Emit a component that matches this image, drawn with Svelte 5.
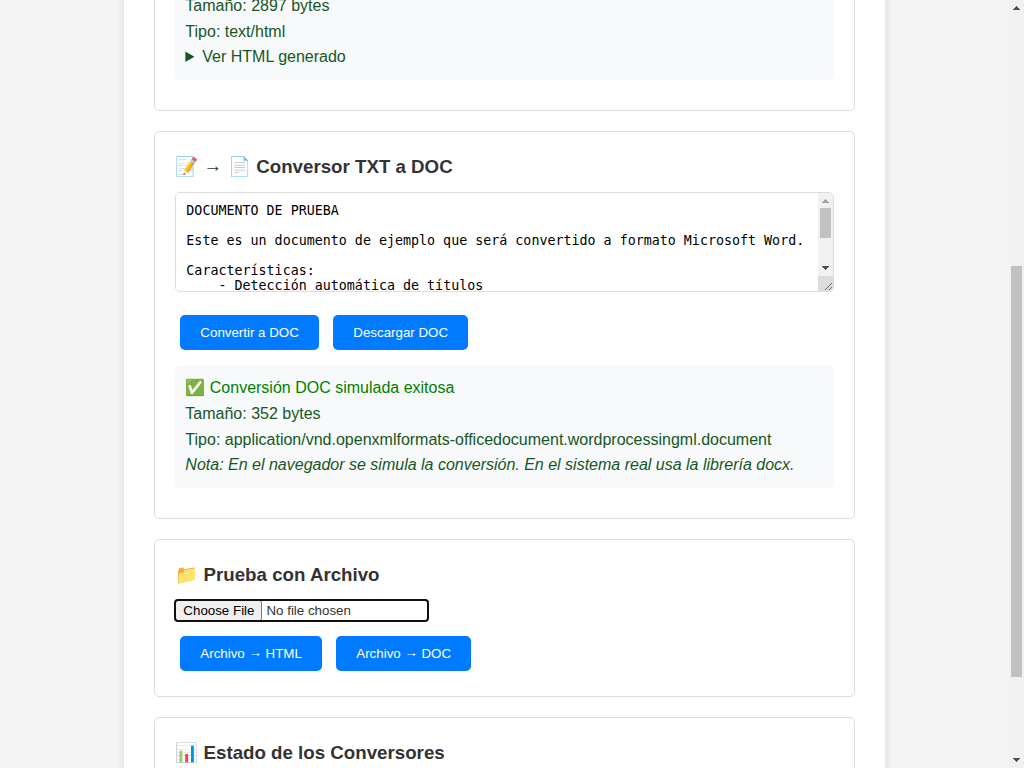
<script>
  const documentText = `DOCUMENTO DE PRUEBA

Este es un documento de ejemplo que será convertido a formato Microsoft Word.

Características:
    - Detección automática de títulos
    - Preservación de párrafos
    - Formato profesional

Fin del documento.`;
</script>

<div class="window">
  <main class="viewport">
    <div class="container">
      <section class="card">
        <div class="result first">
          <div>Tamaño: 2897 bytes</div>
          <div>Tipo: text/html</div>
          <details><summary>Ver HTML generado</summary></details>
        </div>
      </section>

      <section class="card">
        <h3>📝 <span class="arrow">→</span> 📄 Conversor TXT a DOC</h3>
        <div class="editor">
          <textarea value={documentText} spellcheck="false"></textarea>
          <svg class="editor-bar" width="15" height="98" shape-rendering="crispEdges">
            <path d="M0 0h15v98H0z" fill="#f1f1f1" />
            <path d="M7 6h1v1h1v1h1v1h1v1H4V9h1V8h1V7h1z" fill="#a3a3a3" />
            <path d="M2 15h11v30H2z" fill="#c1c1c1" />
            <path d="M4 73h7v1h-1v1H9v1H8v1H7v-1H6v-1H5v-1H4z" fill="#505050" />
            <path d="M0 83h15v15H0z" fill="#dcdcdc" />
            <path d="M7 97l7-7M11 97l3-3" stroke="#6a6a6a" fill="none" shape-rendering="auto" />
          </svg>
        </div>
        <div class="actions">
          <button>Convertir a DOC</button>
          <button>Descargar DOC</button>
        </div>
        <div class="result">
          <div class="success">✅ Conversión DOC simulada exitosa</div>
          <div>Tamaño: 352 bytes</div>
          <div>Tipo: application/vnd.openxmlformats-officedocument.wordprocessingml.document</div>
          <div><em>Nota: En el navegador se simula la conversión. En el sistema real usa la librería docx.</em></div>
        </div>
      </section>

      <section class="card">
        <h3>📁 Prueba con Archivo</h3>
        <input type="file" />
        <div class="actions file-actions">
          <button>Archivo <span class="arrow">→</span> HTML</button>
          <button>Archivo <span class="arrow">→</span> DOC</button>
        </div>
      </section>

      <section class="card last">
        <h3>📊 Estado de los Conversores</h3>
      </section>
    </div>
  </main>
  <div class="scrollbar">
    <svg width="15" height="15" shape-rendering="crispEdges"><path d="M7 6h1v1h1v1h1v1h1v1H4V9h1V8h1V7h1z" fill="#505050" /></svg>
    <div class="track"><div class="thumb"></div></div>
    <svg width="15" height="15" shape-rendering="crispEdges"><path d="M4 5h7v1h-1v1H9v1H8v1H7V8H6V7H5V6H4z" fill="#505050" /></svg>
  </div>
</div>

<style>
  :global(body) {
    margin: 0;
    overflow: hidden;
    background: #f4f4f4;
  }
  .window {
    display: flex;
    width: 1024px;
    height: 768px;
    overflow: hidden;
    font-family: "Liberation Sans", Arial, sans-serif;
    font-size: 16px;
    line-height: 1.6;
    color: #333;
    background: #f4f4f4;
  }
  .viewport {
    width: 1009px;
    height: 768px;
    overflow: hidden;
  }
  .container {
    box-sizing: border-box;
    width: 760.3px;
    height: 920px;
    margin: -37.9px auto 0;
    padding: 0 30px;
    background: #fff;
    box-shadow: 0 2px 10px rgba(0, 0, 0, 0.1);
  }
  .card {
    box-sizing: border-box;
    padding: 20px;
    margin-bottom: 20px;
    border: 1px solid #ddd;
    border-radius: 5px;
  }
  .last {
    height: 180px;
  }
  h3 {
    margin: 0 0 10px;
    font-size: 18.72px;
    line-height: 1.6;
  }
  .arrow {
    line-height: 0;
    vertical-align: 0.1em;
  }
  h3 .arrow {
    margin-right: 0.6px;
  }
  .editor {
    position: relative;
  }
  .editor-bar {
    position: absolute;
    top: 1px;
    right: 1px;
    border-radius: 0 4px 4px 0;
  }
  textarea {
    display: block;
    box-sizing: border-box;
    width: 100%;
    height: 100px;
    padding: 10px;
    border: 1px solid #ddd;
    border-radius: 5px;
    font: 13.3333px "DejaVu Sans Mono", monospace;
  }
  .actions {
    display: flex;
    gap: 14.45px;
    margin: 23px 5px 15px;
  }
  .file-actions {
    margin: 15px 5px 5px;
  }
  button {
    padding: 10px 20px;
    border: 0;
    border-radius: 5px;
    background: #007bff;
    color: #fff;
    font: 13.3333px "Liberation Sans", Arial, sans-serif;
  }
  .result {
    padding: 10px;
    margin-bottom: 10px;
    border-radius: 5px;
    background: #f8f9fa;
    color: #155724;
  }
  .first {
    padding-bottom: 10.5px;
  }
  .success {
    color: green;
  }
  input {
    display: block;
    outline: -webkit-focus-ring-color auto 1px;
    font: 13.3333px "Liberation Sans", Arial, sans-serif;
  }
  .scrollbar {
    display: flex;
    flex-direction: column;
    width: 15px;
    background: #f1f1f1;
  }
  .scrollbar svg {
    display: block;
  }
  .track {
    flex: 1;
    padding: 251px 2px 0;
  }
  .thumb {
    height: 411px;
    background: #c1c1c1;
  }
</style>
